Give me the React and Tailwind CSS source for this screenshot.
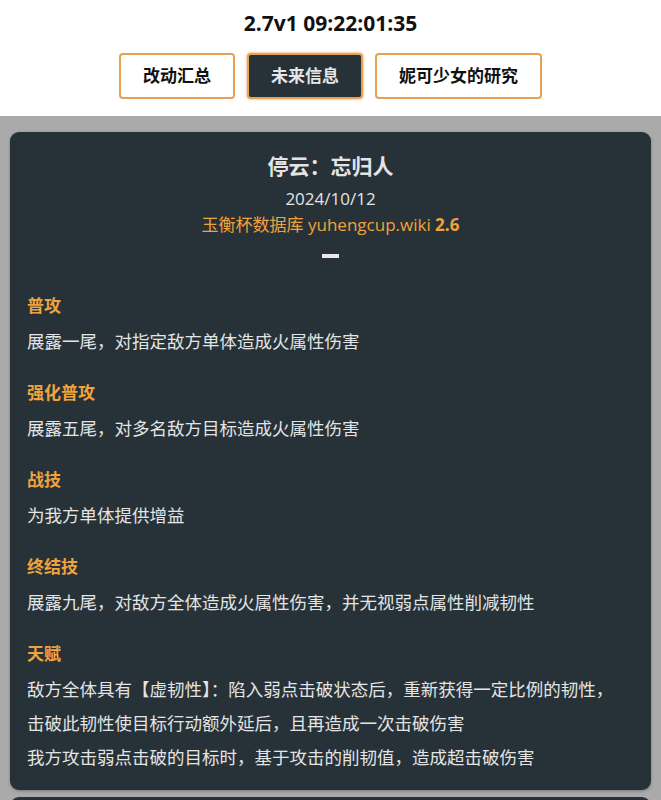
import React from 'react';

const FONT = { fontFamily: '"Open Sans", "Noto Sans CJK SC", sans-serif' };

const tabs = [
  { label: '改动汇总', active: false },
  { label: '未来信息', active: true },
  { label: '妮可少女的研究', active: false },
];

const sections = [
  { title: '普攻', lines: ['展露一尾，对指定敌方单体造成火属性伤害'] },
  { title: '强化普攻', lines: ['展露五尾，对多名敌方目标造成火属性伤害'] },
  { title: '战技', lines: ['为我方单体提供增益'] },
  { title: '终结技', lines: ['展露九尾，对敌方全体造成火属性伤害，并无视弱点属性削减韧性'] },
  {
    title: '天赋',
    lines: [
      '敌方全体具有【虚韧性】：陷入弱点击破状态后，重新获得一定比例的韧性，',
      '击破此韧性使目标行动额外延后，且再造成一次击破伤害',
      '我方攻击弱点击破的目标时，基于攻击的削韧值，造成超击破伤害',
    ],
  },
];

export default function App() {
  return (
    <div className="min-h-[800px] bg-[#aaaaaa]" style={FONT}>
      {/* Header */}
      <div className="bg-white pt-[9px] pb-[17px] flex flex-col items-center">
        <div className="text-[21px] font-bold leading-[28px] text-[#111]">2.7v1 09:22:01:35</div>
        <div className="mt-[16px] flex gap-[12px]">
          {tabs.map((t) => (
            <button
              key={t.label}
              className={
                'h-[46px] px-[22px] rounded-[4px] border-2 border-[#e8a052] text-[17px] font-bold ' +
                (t.active ? 'bg-[#263238] text-[#e6e6e6] shadow-[0_0_3px_#e8a052]' : 'bg-white text-[#111]')
              }
            >
              {t.label}
            </button>
          ))}
        </div>
      </div>

      {/* Card */}
      <div className="pt-[16px] px-[10px] pb-[10px]">
        <div className="bg-[#263238] rounded-[9px] shadow-[0_1px_3px_rgba(0,0,0,0.3)] px-[17px] pt-[19px] pb-[16px] text-[#e4e4e4]">
          <div className="flex flex-col items-center">
            <h2 className="text-[21px] font-bold leading-[30px]">停云：忘归人</h2>
            <div className="mt-[5px] text-[17px] leading-[26px]">2024/10/12</div>
            <div className="text-[17px] leading-[26px] text-[#f0a23c]">
              玉衡杯数据库 yuhengcup.wiki <span className="font-bold">2.6</span>
            </div>
            <div className="mt-[16px] w-[17px] h-[4px] bg-[#e8e8e8]" />
          </div>

          <div className="mt-[35px] flex flex-col gap-[22px]">
            {sections.map((s) => (
              <div key={s.title}>
                <h3 className="text-[17px] font-bold leading-[26px] text-[#f0a23c]">{s.title}</h3>
                <div className="mt-[5px]">
                  {s.lines.map((l) => (
                    <p key={l} className="text-[17.5px] leading-[34px]">{l}</p>
                  ))}
                </div>
              </div>
            ))}
          </div>
        </div>
        <div className="mt-[7px] h-[10px] bg-[#263238] rounded-t-[9px]" />
      </div>
    </div>
  );
}
